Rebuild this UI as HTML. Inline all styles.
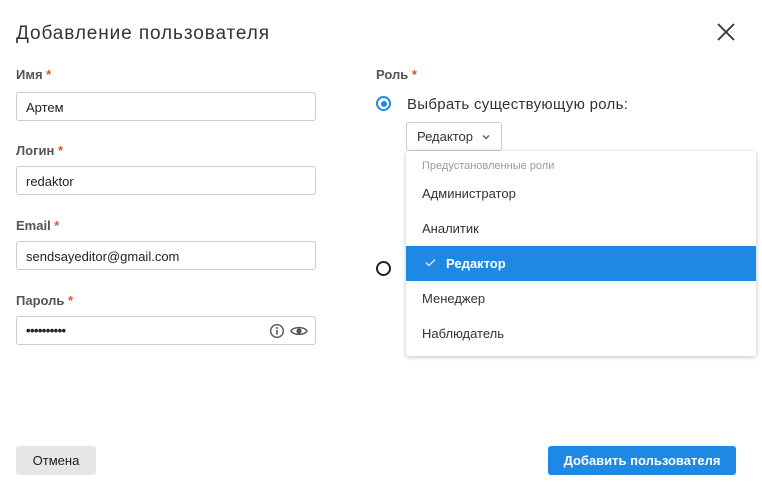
<!DOCTYPE html>
<html><head><meta charset="utf-8"><style>
*{box-sizing:border-box;margin:0;padding:0}
body{width:762px;height:498px;background:#fff;font-family:"Liberation Sans","Noto Sans CJK SC",sans-serif;position:relative;overflow:hidden;color:#333}
.a{position:absolute}
.t{left:16px;top:23px;font-size:19px;color:#333;letter-spacing:.9px}
.lbl{font-size:13px;color:#555;font-weight:bold}
.lbl b{color:#e0522d}
.inp{left:16px;width:300px;height:29px;border:1px solid #ccc;border-radius:3px;font-size:13px;padding:7px 9px;color:#222}
.btn{height:29px;border-radius:3px;font-size:13px;text-align:center;line-height:29px}
.menu{left:406px;top:151px;width:350px;height:205px;background:#fff;box-shadow:0 1px 5px rgba(0,0,0,.25);border-radius:2px}
.it{position:absolute;left:0;width:350px;height:35px;line-height:35px;padding-left:16px;font-size:13px;color:#333}
</style></head><body>
<div class="a t">Добавление пользователя</div>
<svg class="a" style="left:716px;top:22px" width="20" height="20" viewBox="0 0 20 20"><path d="M2 2L18 18M18 2L2 18" stroke="#333" stroke-width="1.8"/></svg>

<div class="a lbl" style="left:16px;top:67px">Имя <b>*</b></div>
<div class="a inp" style="top:92px">Артем</div>
<div class="a lbl" style="left:16px;top:143px">Логин <b>*</b></div>
<div class="a inp" style="top:166px">redaktor</div>
<div class="a lbl" style="left:16px;top:218px">Email <b>*</b></div>
<div class="a inp" style="top:241px">sendsayeditor@gmail.com</div>
<div class="a lbl" style="left:16px;top:293px">Пароль <b>*</b></div>
<div class="a inp" style="top:316px;font-size:13px;letter-spacing:-0.6px;padding-top:6px;font-weight:bold">••••••••••</div>
<svg class="a" style="left:269px;top:323px" width="16" height="16" viewBox="0 0 16 16"><circle cx="8" cy="8" r="6.3" fill="none" stroke="#555" stroke-width="1.4"/><path d="M8 7v4.5" stroke="#555" stroke-width="1.6"/><circle cx="8" cy="5" r="1" fill="#555"/></svg>
<svg class="a" style="left:290px;top:324px" width="18" height="14" viewBox="0 0 18 14"><path d="M1 7C3.5 2.5 14.5 2.5 17 7C14.5 11.5 3.5 11.5 1 7Z" fill="none" stroke="#555" stroke-width="1.5"/><circle cx="9" cy="7" r="2.6" fill="#555"/></svg>

<div class="a lbl" style="left:376px;top:67px">Роль <b>*</b></div>
<div class="a" style="left:376px;top:96px;width:15px;height:15px;border:2px solid #1e88e5;border-radius:50%"><div style="margin:2.5px;width:6px;height:6px;background:#1e88e5;border-radius:50%"></div></div>
<div class="a" style="left:407px;top:96px;font-size:15px;color:#333;letter-spacing:.3px">Выбрать существующую роль:</div>
<div class="a" style="left:406px;top:122px;width:96px;height:29px;border:1px solid #ccc;border-radius:3px;font-size:13px;padding:6px 0 0 10px">Редактор <svg width="10" height="8" viewBox="0 0 10 8" style="margin-left:4px"><path d="M2 2.5L5 5.5L8 2.5" fill="none" stroke="#555" stroke-width="1.3"/></svg></div>
<div class="a" style="left:376px;top:261px;width:15px;height:15px;border:2px solid #222;border-radius:50%"></div>

<div class="a menu">
<div style="position:absolute;left:16px;top:9px;font-size:11px;color:#999">Предустановленные роли</div>
<div class="it" style="top:25px">Администратор</div>
<div class="it" style="top:60px">Аналитик</div>
<div class="it" style="top:95px;background:#1e88e5;color:#fff;font-weight:bold;padding-left:40px"><svg style="position:absolute;left:19px;top:12px" width="11" height="9" viewBox="0 0 11 9"><path d="M1 4.5L4 7.5L10 1.5" fill="none" stroke="#cfe3f7" stroke-width="1.4"/></svg>Редактор</div>
<div class="it" style="top:130px">Менеджер</div>
<div class="it" style="top:165px">Наблюдатель</div>
</div>

<div class="a btn" style="left:16px;top:446px;width:80px;background:#e6e6e6;color:#222">Отмена</div>
<div class="a btn" style="left:548px;top:446px;width:188px;background:#1e88e5;color:#fff;font-weight:bold">Добавить пользователя</div>
</body></html>
